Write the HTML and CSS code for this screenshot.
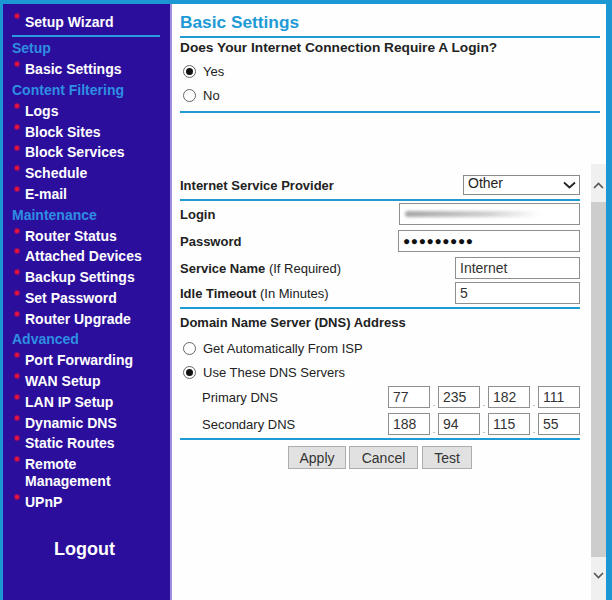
FILE: index.html
```html
<!DOCTYPE html>
<html lang="en">
<head>
  <meta charset="UTF-8" />
  <title>Basic Settings</title>
  <link rel="stylesheet" href="styles.css">
</head>
<body>
  <div class="page">
    <nav class="menu">
      <div class="wizard"><span class="item">Setup Wizard</span></div>
      <ul>
        <li class="head">Setup</li>
        <li class="item">Basic Settings</li>
        <li class="head">Content Filtering</li>
        <li class="item">Logs</li>
        <li class="item">Block Sites</li>
        <li class="item">Block Services</li>
        <li class="item">Schedule</li>
        <li class="item">E-mail</li>
        <li class="head">Maintenance</li>
        <li class="item">Router Status</li>
        <li class="item">Attached Devices</li>
        <li class="item">Backup Settings</li>
        <li class="item">Set Password</li>
        <li class="item">Router Upgrade</li>
        <li class="head">Advanced</li>
        <li class="item">Port Forwarding</li>
        <li class="item">WAN Setup</li>
        <li class="item">LAN IP Setup</li>
        <li class="item">Dynamic DNS</li>
        <li class="item">Static Routes</li>
        <li class="item">Remote<br>Management</li>
        <li class="item">UPnP</li>
      </ul>
      <div class="logout">Logout</div>
    </nav>

    <main class="main">
      <div class="top">
        <h1>Basic Settings</h1>
        <div class="rule"></div>
        <div class="question">Does Your Internet Connection Require A Login?</div>
        <div class="opt first"><span class="radio on"></span>Yes</div>
        <div class="opt"><span class="radio"></span>No</div>
        <div class="rule low"></div>
      </div>

      <div class="frame">
        <div class="frame-body">
          <div class="row isp">
            <b>Internet Service Provider</b>
            <div class="select">Other
              <svg width="13" height="8" viewBox="0 0 13 8"><path d="M1 1.5l5.5 5 5.5-5" fill="none" stroke="#222" stroke-width="1.8"/></svg>
            </div>
          </div>
          <div class="rule thin"></div>

          <div class="row r-login">
            <b>Login</b>
            <div class="field wide"><span class="smear"></span></div>
          </div>
          <div class="row r-pass">
            <b>Password</b>
            <div class="field wide2 dots">●●●●●●●●●</div>
          </div>
          <div class="row r-svc">
            <span><b>Service Name</b> (If Required)</span>
            <div class="field short">Internet</div>
          </div>
          <div class="row r-idle">
            <span><b>Idle Timeout</b> (In Minutes)</span>
            <div class="field short">5</div>
          </div>
          <div class="rule thin r-after"></div>

          <div class="dns-head"><b>Domain Name Server (DNS) Address</b></div>
          <div class="opt dns-first"><span class="radio"></span>Get Automatically From ISP</div>
          <div class="opt"><span class="radio on"></span>Use These DNS Servers</div>

          <div class="row ip r-prim">
            <span class="ip-label">Primary DNS</span>
            <div class="quad">
              <div class="field oct">77</div><i>.</i>
              <div class="field oct">235</div><i>.</i>
              <div class="field oct">182</div><i>.</i>
              <div class="field oct">111</div>
            </div>
          </div>
          <div class="row ip r-sec">
            <span class="ip-label">Secondary DNS</span>
            <div class="quad">
              <div class="field oct">188</div><i>.</i>
              <div class="field oct">94</div><i>.</i>
              <div class="field oct">115</div><i>.</i>
              <div class="field oct">55</div>
            </div>
          </div>
          <div class="rule thin r-end"></div>

          <div class="buttons">
            <button class="apply">Apply</button>
            <button class="cancel">Cancel</button>
            <button class="test">Test</button>
          </div>
        </div>

        <div class="scrollbar">
          <div class="sb-btn up">
            <svg width="11" height="7" viewBox="0 0 11 7"><path d="M1 6l4.5-4.5L10 6" fill="none" stroke="#555" stroke-width="1.6"/></svg>
          </div>
          <div class="sb-thumb"></div>
          <div class="sb-btn down">
            <svg width="11" height="7" viewBox="0 0 11 7"><path d="M1 1l4.5 4.5L10 1" fill="none" stroke="#555" stroke-width="1.6"/></svg>
          </div>
        </div>
      </div>
    </main>
  </div>
</body>
</html>
```

FILE: styles.css
```css
* {
  box-sizing: border-box;
  margin: 0;
  padding: 0;
}

body {
  background: #1b98d4;
  font-family: "Liberation Sans", Arial, sans-serif;
  color: #222;
  overflow: hidden;
}

.page {
  display: flex;
  height: 600px;
  padding: 4px 6px 0 3px;
}

/* left menu */

.menu {
  width: 169px;
  flex-shrink: 0;
  background: #2c0e9d;
  border-right: 2px solid #9f8de0;
  font-size: 14px;
  font-weight: 700;
}

.wizard {
  margin: 0 10px 0 9px;
  padding: 9px 0 4px;
  line-height: 18px;
  border-bottom: 2px solid #2a9be0;
}

.wizard .item {
  display: block;
  padding-left: 13px;
  position: relative;
}

.menu ul {
  list-style: none;
  margin-top: 1.6px;
}

.menu li {
  line-height: 17px;
  padding: 1.9px 0 1.9px 9px;
}

.head {
  color: #2e8fe2;
}

.item {
  color: #fff;
  position: relative;
}

.menu li.item {
  padding-left: 22px;
}

.item::before {
  content: "";
  position: absolute;
  left: 12px;
  top: 3px;
  width: 4px;
  height: 4px;
  border-radius: 50%;
  background: #e8123a;
  box-shadow: 0 0 1px 1px rgba(232, 18, 58, 0.5);
}

.wizard .item::before {
  left: 3px;
  top: 1px;
}

.logout {
  color: #fff;
  font-size: 18px;
  line-height: 22px;
  text-align: center;
  margin-top: 25px;
  padding-right: 4px;
}

/* main area */

.main {
  flex: 1;
  background: #fefefe;
  padding: 8px 0 0 8px;
  font-size: 13px;
  display: flex;
  flex-direction: column;
}

.top {
  padding-right: 6px;
}

h1 {
  font-size: 17.3px;
  line-height: 20px;
  color: #1d9ad6;
}

.rule {
  height: 2px;
  background: #1e9bd2;
  margin-top: 4px;
}

.rule.low {
  margin-top: 4px;
}

.question {
  font-weight: 700;
  font-size: 13.7px;
  line-height: 16px;
  margin-top: 2px;
}

.opt {
  display: flex;
  align-items: center;
  height: 24px;
  padding-left: 3px;
  font-size: 13px;
}

.opt.first {
  margin-top: 3px;
}

.radio {
  width: 13px;
  height: 13px;
  border: 1px solid #666;
  border-radius: 50%;
  background: #fff;
  margin-right: 7px;
  display: flex;
  align-items: center;
  justify-content: center;
}

.radio.on::after {
  content: "";
  width: 7px;
  height: 7px;
  border-radius: 50%;
  background: #111;
}

/* scrolling frame */

.frame {
  flex: 1;
  display: flex;
  margin-top: 51px;
  min-height: 0;
}

.frame-body {
  width: 400px;
}

.row {
  display: flex;
  align-items: center;
  justify-content: space-between;
  height: 22px;
}

.isp {
  margin-top: 10px;
}

.rule.thin {
  margin-top: 3px;
}

.select {
  width: 117px;
  height: 20px;
  border: 1px solid #8a8a8a;
  background: #fff;
  font-size: 14px;
  line-height: 15px;
  padding-left: 4px;
  display: flex;
  justify-content: space-between;
  align-items: flex-start;
}

.select svg {
  margin: 5px 3px 0 0;
}

.field {
  height: 22px;
  border: 1px solid #8f8f8f;
  background: #fff;
  font-size: 14px;
  line-height: 20px;
  padding-left: 4px;
  color: #333;
}

.wide {
  width: 181px;
  display: flex;
  align-items: center;
}

.wide2 {
  width: 182px;
}

.short {
  width: 125px;
}

.smear {
  display: block;
  width: 135px;
  height: 6px;
  margin-left: 1px;
  border-radius: 3px;
  background: linear-gradient(90deg, #a6a6a6, #cfcfcf 60%, rgba(235, 235, 235, 0));
  filter: blur(1.5px);
}

.dots {
  font-size: 12px;
  letter-spacing: 0.6px;
  color: #111;
  line-height: 20px;
}

.r-login {
  margin-top: 2px;
}

.r-pass,
.r-svc {
  margin-top: 5px;
}

.r-idle {
  margin-top: 3px;
}

.dns-head {
  line-height: 16px;
  margin-top: 6px;
}

.dns-first {
  margin-top: 5px;
}

.ip {
  padding-left: 22px;
}

.r-prim {
  margin-top: 2px;
}

.r-sec {
  margin-top: 5px;
}

.r-end {
  margin-top: 4px;
}

.quad {
  display: flex;
  align-items: flex-end;
}

.oct {
  width: 42px;
}

.quad i {
  font-style: normal;
  width: 8px;
  text-align: center;
  font-size: 9px;
  line-height: 9px;
  color: #777;
}

.buttons {
  display: flex;
  justify-content: center;
  gap: 3px;
  margin-top: 6px;
}

button {
  height: 23px;
  border: 1px solid #adadad;
  background: #e1e1e1;
  font-family: "Liberation Sans", Arial, sans-serif;
  font-size: 14px;
  color: #333;
}

.apply {
  width: 58px;
}

.cancel {
  width: 69px;
  margin-right: 1px;
}

.test {
  width: 50px;
}

.scrollbar {
  width: 15px;
  margin-left: 11px;
  background: #f0f0f0;
  display: flex;
  flex-direction: column;
}

.sb-btn {
  display: flex;
  justify-content: center;
}

.sb-btn.up {
  height: 38px;
  padding-top: 18px;
}

.sb-btn.down {
  height: 43px;
  padding-top: 15px;
}

.sb-thumb {
  flex: 1;
  background: #cdcdcd;
}
```
